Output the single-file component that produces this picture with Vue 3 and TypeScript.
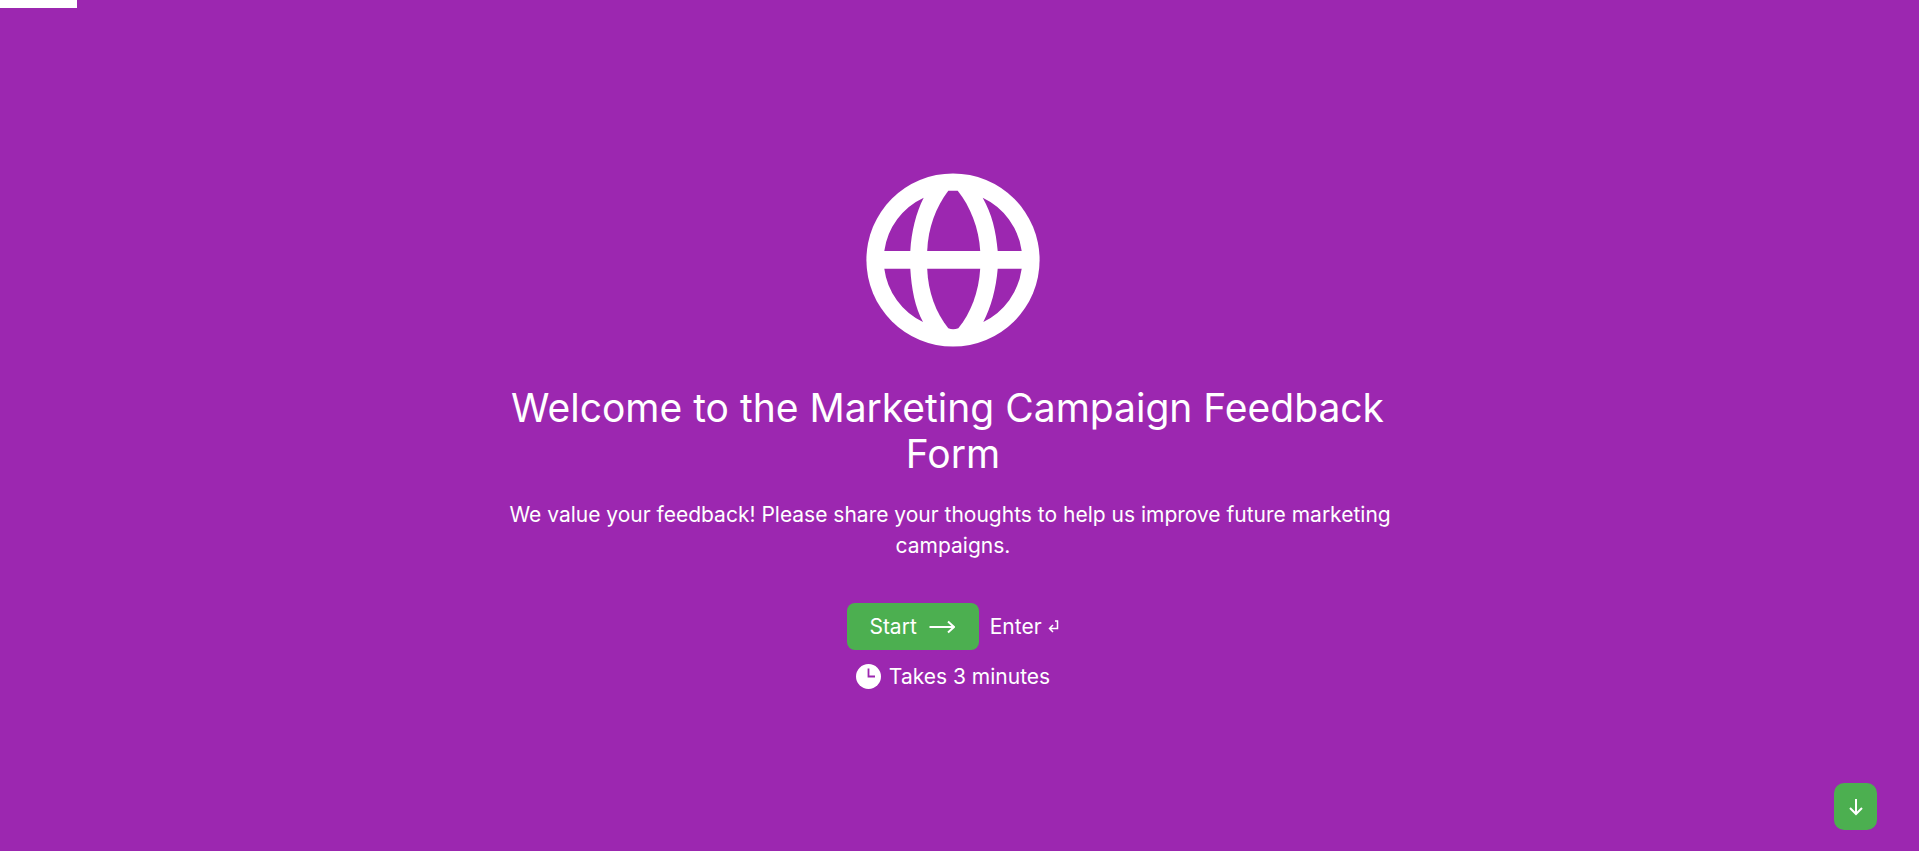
<script setup lang="ts">
import { ref } from 'vue'

const progress = ref<number>(4)
const minutes = 3
</script>

<template>
  <main class="page">
    <div class="progress" role="progressbar" aria-label="Form progress" :aria-valuenow="progress">
      <div class="bar" :style="{ width: progress + '%' }"></div>
    </div>

    <section class="welcome">
      <svg class="globe" viewBox="0 0 174 174" aria-hidden="true">
        <circle cx="87" cy="87" r="86.6" fill="#fff" />
        <g fill="#9c27b0">
          <path d="M82.3 17.8H91.7C104 33 113 55 114.2 78H61.2C62 55 70 34 82.3 17.8Z" />
          <path d="M61.2 95.7H114.2C113 118 105 140 92.3 155.2Q87 157.4 82.3 155.2C70 140 62 119 61.2 95.7Z" />
          <path d="M57.7 24.7C50 40 45.5 58 44.3 78H18.3A69 69 0 0 1 57.7 24.7Z" />
          <path d="M116.7 24.7A69 69 0 0 1 155.7 78H131.7C130 58 126 41 116.7 24.7Z" />
          <path d="M18.3 95.7H44.3C45.5 116 49 134 57 149A69 69 0 0 1 18.3 95.7Z" />
          <path d="M131.7 95.7H155.7A69 69 0 0 1 117.3 149C125 134 130 116 131.7 95.7Z" />
        </g>
      </svg>

      <h1>Welcome to the Marketing Campaign Feedback Form</h1>
      <p class="intro">We value your feedback! Please share your thoughts to help us improve future marketing campaigns.</p>

      <div class="actions">
        <button class="start" type="button">
          <span>Start</span>
          <svg class="arrow" viewBox="0 0 26 14" aria-hidden="true">
            <path d="M0.5 7H25M19 1.5L25 7L19 12.5" />
          </svg>
        </button>
        <span class="hint">
          Enter
          <svg class="enter" viewBox="0 0 11 14" aria-hidden="true">
            <path d="M7 1H9.5V8.5H1.5M5 5L1.5 8.5L5 12" />
          </svg>
        </span>
      </div>

      <div class="duration">
        <svg class="clock" viewBox="0 0 25 25" aria-hidden="true">
          <circle cx="12.5" cy="12.5" r="12.5" fill="#fff" />
          <path d="M12.5 4.5V12.5H19" fill="none" stroke="#9c27b0" stroke-width="1.8" />
        </svg>
        <span>Takes {{ minutes }} minutes</span>
      </div>
    </section>

    <button class="next" type="button" aria-label="Next question">
      <svg viewBox="0 0 16 18" aria-hidden="true">
        <path d="M8 1V16M2 10L8 16L14 10" />
      </svg>
    </button>
  </main>
</template>

<style>
body {
  margin: 0;
  background: #9c27b0;
}
</style>

<style scoped>
.page {
  position: relative;
  box-sizing: border-box;
  min-height: 100vh;
  padding: 0 13px 0 0;
  display: flex;
  align-items: center;
  justify-content: center;
  background: #9c27b0;
  color: #fff;
  font-family: Inter, "Liberation Sans", sans-serif;
  font-size: 21px;
  line-height: 31px;
}

.progress {
  position: absolute;
  top: 0;
  left: 0;
  width: 100%;
  height: 8px;
}

.bar {
  height: 100%;
  background: #fff;
}

.welcome {
  display: flex;
  flex-direction: column;
  align-items: center;
  width: 100%;
  max-width: 896px;
  padding: 14px 0 0;
  text-align: center;
}

.globe {
  width: 174px;
  height: 174px;
}

h1,
.intro {
  white-space: break-spaces;
}

h1 {
  margin: 38px 0 0;
  font-size: 39px;
  font-weight: 400;
  line-height: 46px;
}

.intro {
  margin: 22px 0 0;
}

.actions {
  display: flex;
  align-items: center;
  gap: 11px;
  margin-top: 42px;
}

button {
  border: 0;
  background: #4caf50;
  color: #fff;
  font: inherit;
  cursor: pointer;
}

.start {
  display: flex;
  align-items: center;
  gap: 12px;
  height: 47px;
  padding: 0 24px 0 22px;
  border-radius: 8px;
}

.arrow,
.enter,
.next svg {
  fill: none;
  stroke: #fff;
  stroke-width: 2;
}

.arrow {
  width: 26px;
  height: 14px;
}

.hint {
  display: flex;
  align-items: center;
  gap: 6px;
}

.enter {
  width: 11px;
  height: 14px;
  stroke-width: 1.5;
}

.duration {
  display: flex;
  align-items: center;
  gap: 8px;
  margin-top: 11px;
}

.clock {
  width: 25px;
  height: 25px;
}

.next {
  position: absolute;
  right: 42px;
  bottom: 21px;
  display: flex;
  align-items: center;
  justify-content: center;
  width: 43px;
  height: 47px;
  padding: 0;
  border-radius: 10px;
}

.next svg {
  width: 16px;
  height: 18px;
}
</style>
